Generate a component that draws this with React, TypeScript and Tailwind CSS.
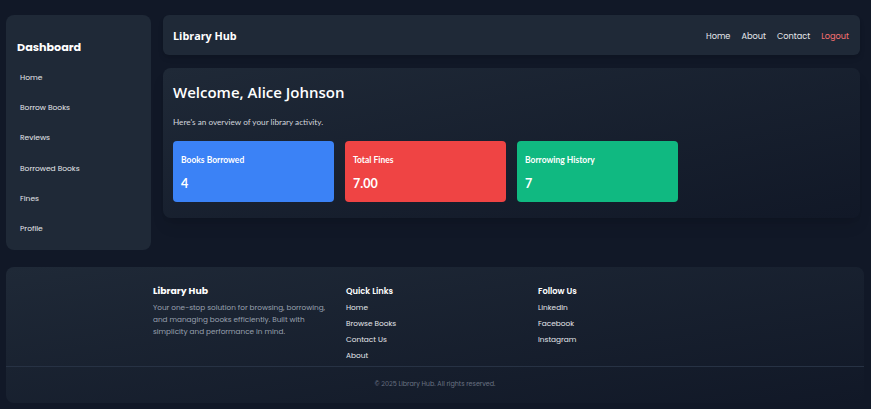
const poppins = "font-['Poppins','Noto_Sans','Open_Sans',sans-serif]";

const sideLinks = ["Home", "Borrow Books", "Reviews", "Borrowed Books", "Fines", "Profile"];

const stats = [
  { title: "Books Borrowed", value: "4", color: "bg-[#3b82f6]" },
  { title: "Total Fines", value: "7.00", color: "bg-[#ef4444]" },
  { title: "Borrowing History", value: "7", color: "bg-[#10b981]" },
];

export default function App() {
  return (
    <div className="min-h-[409px] w-full bg-[#111827] text-white">
      <div className="flex gap-[12px] pl-[6px] pr-[11px] pt-[15px]">
        {/* sidebar */}
        <aside className="w-[145px] h-[235px] shrink-0 rounded-lg bg-[#1f2937] pl-[11px] pt-[26px]">
          <h2 className={`${poppins} text-[11.2px] font-bold leading-[12px] mb-[19px]`}>Dashboard</h2>
          <ul className={`${poppins} text-[7.5px] text-gray-200`}>
            {sideLinks.map((l) => (
              <li key={l} className="h-[30.2px] pl-[3px] leading-[12px]">
                {l}
              </li>
            ))}
          </ul>
        </aside>

        <div className="flex-1 flex flex-col gap-[13px]">
          {/* header */}
          <header className="h-[40px] rounded-md bg-[#1f2937] flex items-center justify-between pl-[10px] pr-[11px] pt-[2px] shadow-md">
            <span className="font-['Open_Sans',sans-serif] text-[10.8px] font-bold">Library Hub</span>
            <nav className={`${poppins} flex gap-[11px] text-[8.2px] text-gray-200`}>
              <span>Home</span>
              <span>About</span>
              <span>Contact</span>
              <span className="text-[#f87171]">Logout</span>
            </nav>
          </header>

          {/* welcome */}
          <section className="h-[150px] rounded-lg bg-gradient-to-br from-[#1f2937] to-[#111827] pl-[10px] pt-[14px] shadow-lg">
            <h1 className="font-['Open_Sans',sans-serif] text-[15px] font-semibold leading-[20px]">
              Welcome, Alice Johnson
            </h1>
            <p className="font-['Lato',sans-serif] text-[8.2px] text-gray-300 mt-[14px]">
              Here's an overview of your library activity.
            </p>
            <div className="flex gap-[11px] mt-[13px]">
              {stats.map((s) => (
                <div key={s.title} className={`${s.color} w-[161px] h-[61px] rounded pl-[8px] pt-[13px] font-['Lato',sans-serif]`}>
                  <div className="text-[8.5px] font-bold leading-[12px]">{s.title}</div>
                  <div className="text-[12.5px] font-bold leading-[16px] mt-[10px]">{s.value}</div>
                </div>
              ))}
            </div>
          </section>
        </div>
      </div>

      {/* footer */}
      <footer className={`${poppins} mt-[17px] ml-[6px] mr-[7px] h-[136px] rounded-lg bg-gradient-to-br from-[#1f2937] to-[#111827]`}>
        <div className="grid grid-cols-[193px_192px_193px] pl-[147px] pt-[18px] h-[100px] border-b border-[#273244]">
          <div>
            <h3 className="text-[9.3px] font-bold leading-[12px]">Library Hub</h3>
            <p className="text-[7.3px] text-gray-400 leading-[12px] mt-[5px]">
              Your one-stop solution for browsing, borrowing,
              <br />
              and managing books efficiently. Built with
              <br />
              simplicity and performance in mind.
            </p>
          </div>
          <div>
            <h3 className="text-[8.3px] font-semibold leading-[12px]">Quick Links</h3>
            <ul className="text-[7.4px] text-gray-200 mt-[5px]">
              <li className="h-[16px] leading-[12px]">Home</li>
              <li className="h-[16px] leading-[12px]">Browse Books</li>
              <li className="h-[16px] leading-[12px]">Contact Us</li>
              <li className="h-[16px] leading-[12px]">About</li>
            </ul>
          </div>
          <div>
            <h3 className="text-[8.3px] font-semibold leading-[12px]">Follow Us</h3>
            <ul className="text-[7.4px] text-gray-200 mt-[5px]">
              <li className="h-[16px] leading-[12px]">LinkedIn</li>
              <li className="h-[16px] leading-[12px]">Facebook</li>
              <li className="h-[16px] leading-[12px]">Instagram</li>
            </ul>
          </div>
        </div>
        <p className="text-center text-[6.4px] text-gray-500 pt-[12px]">© 2025 Library Hub. All rights reserved.</p>
      </footer>
    </div>
  );
}
